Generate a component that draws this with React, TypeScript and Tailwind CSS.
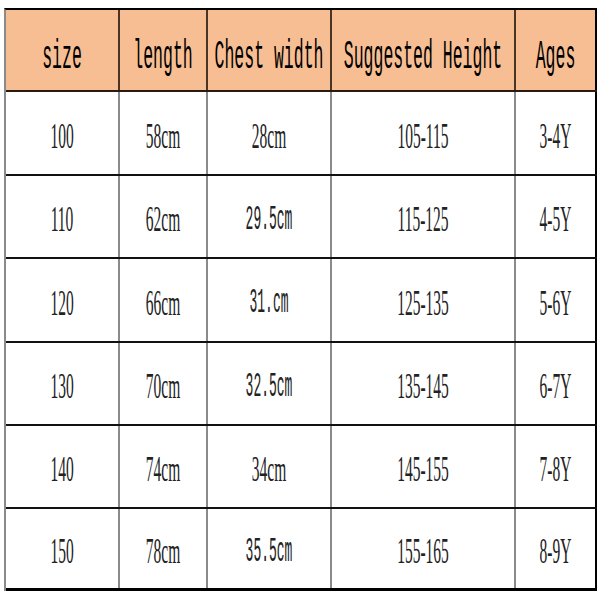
import React from "react";

const widths = ["w-[114px]", "w-[88px]", "w-[124px]", "w-[184px]", "w-[81px]"];

type Cell = { t: string; mono?: boolean };

const rows: { h: string; cells: Cell[] }[] = [
  { h: "h-[84px]", cells: [{ t: "100" }, { t: "58cm" }, { t: "28cm" }, { t: "105-115" }, { t: "3-4Y" }] },
  { h: "h-[83px]", cells: [{ t: "110" }, { t: "62cm" }, { t: "29.5cm", mono: true }, { t: "115-125" }, { t: "4-5Y" }] },
  { h: "h-[84px]", cells: [{ t: "120" }, { t: "66cm" }, { t: "31.cm", mono: true }, { t: "125-135" }, { t: "5-6Y" }] },
  { h: "h-[83px]", cells: [{ t: "130" }, { t: "70cm" }, { t: "32.5cm", mono: true }, { t: "135-145" }, { t: "6-7Y" }] },
  { h: "h-[83px]", cells: [{ t: "140" }, { t: "74cm" }, { t: "34cm" }, { t: "145-155" }, { t: "7-8Y" }] },
  { h: "h-[82px]", cells: [{ t: "150" }, { t: "78cm" }, { t: "35.5cm", mono: true }, { t: "155-165" }, { t: "8-9Y" }] },
];

const headers = ["size", "length", "Chest width", "Suggested Height", "Ages"];

export default function App() {
  return (
    <div className="w-[600px] h-[600px] bg-white pl-[4px] pt-[8px] overflow-hidden">
      <div className="w-[593px] border-t-2 border-t-black border-l-2 border-l-[#8a8a8a] border-r-0">
        {/* header */}
        <div className="flex h-[82px] bg-[#f8be93] border-b-2 border-b-[#2a1a10]">
          {headers.map((h, i) => (
            <div
              key={h}
              className={`${widths[i]} h-full flex items-center justify-center pt-[16px] ${
                i === 4 ? "border-r-2 border-r-black" : "border-r-2 border-r-[#4a3424]"
              }`}
            >
              <span
                className="inline-block scale-y-[2.5] text-[16.5px] leading-none text-black whitespace-pre"
                style={{ fontFamily: '"Liberation Mono", monospace' }}
              >
                {h}
              </span>
            </div>
          ))}
        </div>
        {rows.map((r, ri) => (
          <div
            key={ri}
            className={`flex ${r.h} ${
              ri === rows.length - 1 ? "border-b-[3px] border-b-black" : "border-b-2 border-b-[#111]"
            }`}
          >
            {r.cells.map((c, ci) => (
              <div
                key={ci}
                className={`${widths[ci]} h-full flex items-center justify-center pt-[5px] ${
                  ci === 4 ? "border-r-2 border-r-black" : "border-r-2 border-r-[#8a8a8a]"
                }`}
              >
                {c.mono ? (
                  <span
                    className="inline-block scale-y-[2.75] text-[13px] leading-none text-[#222] whitespace-pre"
                    style={{ fontFamily: '"Liberation Mono", monospace' }}
                  >
                    {c.t}
                  </span>
                ) : (
                  <span
                    className="inline-block scale-y-[2.3] text-[15.5px] leading-none text-[#222] whitespace-pre"
                    style={{ fontFamily: '"Liberation Serif", serif' }}
                  >
                    {c.t}
                  </span>
                )}
              </div>
            ))}
          </div>
        ))}
      </div>
    </div>
  );
}
